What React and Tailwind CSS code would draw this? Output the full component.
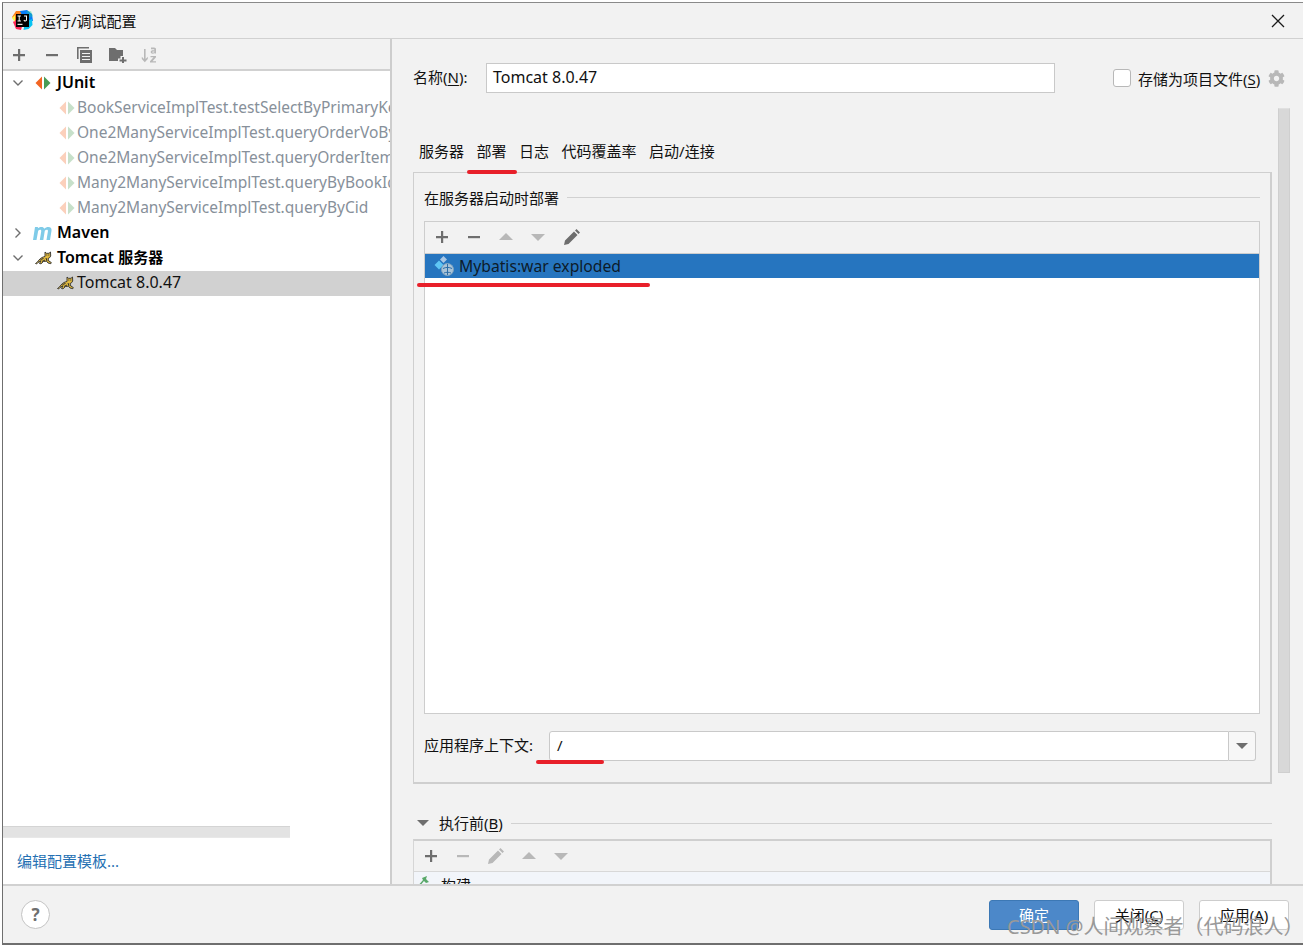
import React from "react";
import { FaCog } from "react-icons/fa";

const Chevron = ({ open }) => (
  <svg width="12" height="12" viewBox="0 0 12 12" className="shrink-0">
    <path d={open ? "M1.5 3.500 6 8l4.500-4.500" : "M3.500 1.500 8 6l-4.500 4.500"} fill="none" stroke="#6e6e6e" strokeWidth="1.400" />
  </svg>
);

const JUnitIcon = ({ faded }) => (
  <svg width="16" height="16" viewBox="0 0 16 16" className="shrink-0" opacity={faded ? 0.3 : 1}>
    <path d="M7 1.500v13L.5 8z" fill="#f26522" />
    <path d="M9 1.500v13L15.500 8z" fill="#499c54" />
  </svg>
);

const MavenIcon = () => (
  <svg width="20" height="16" viewBox="0 0 20 16" className="-ml-[2px] shrink-0">
    <path d="M0 15 2 2h3l-.2 1.300C6 2.300 7.300 2 8.500 2c1.400 0 2.400.6 2.700 1.700C12.400 2.500 13.900 2 15.300 2c2.500 0 3.600 1.400 3.200 3.800L17 15h-3.500l1.400-8.500c.2-1.100-.2-1.700-1.100-1.700-.7 0-1.400.4-2 1L10.300 15H6.800l1.400-8.500c.2-1.100-.2-1.700-1.100-1.700-.7 0-1.300.3-1.900 1L3.500 15z" fill="#7fcbe8" />
  </svg>
);

const TomcatIcon = () => (
  <svg width="18" height="15" viewBox="0 0 18 15" className="shrink-0">
    <path d="M.5 13.500c1.500-.8 2.500-2 3.500-3.500 1.500-2 3.500-3 6-3.500L10 2l1.500 1.300h2.500L15.500 2l.2 4-1.200 1.800-1.500.8.800 2.400 2.500 1.500-.5 1.200-2.800-.7-1.500-1.800-3 .3-2.500 2.300-1.500-.3 1.500-2.800L3 12.500l-1.500 1.500z" fill="#e0b93e" stroke="#2f2f2f" strokeWidth="0.900" strokeLinejoin="round" />
    <path d="M11.300 5h1M13.300 5h1M5.500 9.500l3-1M7 11.500l3-1.500M11 8l1 3" stroke="#2f2f2f" strokeWidth="1" fill="none" />
  </svg>
);

const Logo = () => (
  <svg width="21" height="21" viewBox="0 0 21 21">
    <path d="M0 7 4 1l6 0 0 9-5 3z" fill="#fc801d" />
    <path d="M1 12 6 8l5 5-2 7-5-1z" fill="#fe2857" />
    <path d="M8 1 15 0l5 4 1 7-9-1z" fill="#087cfa" />
    <path d="M14 1h5l2 5-4 2z" fill="#21d789" opacity="0.35" />
    <path d="M13 12l7-3 .5 6-4 4-5 1z" fill="#07c3f2" />
    <path d="M0 8l3-3v7z" fill="#fcf84a" />
    <rect x="4" y="4" width="13" height="13" fill="#000" />
    <rect x="5.500" y="13.800" width="5" height="1.100" fill="#fff" />
    <path d="M5.500 5.500h3.400v1H7.700v4h1.200v1H5.500v-1h1.200v-4H5.500zM12 5.500h3v4.300c0 1.100-.7 1.700-1.700 1.700-.9 0-1.600-.5-1.800-1.300l.9-.4c.1.500.4.700.8.700s.8-.2.800-.8V6.500H12z" fill="#fff" />
  </svg>
);

const Plus = ({ c = "#6e6e6e" }) => (
  <svg width="16" height="16" viewBox="0 0 16 16" className="shrink-0"><path d="M7 2h2.200v5H14v2.200H9.200V14H7V9.200H2V7h5z" fill={c} /></svg>
);
const Minus = ({ c = "#6e6e6e" }) => (
  <svg width="16" height="16" viewBox="0 0 16 16" className="shrink-0"><rect x="2" y="7" width="12" height="2.200" fill={c} /></svg>
);
const Up = ({ c = "#b8b8b8" }) => (
  <svg width="16" height="16" viewBox="0 0 16 16" className="shrink-0"><path d="M8 4l7 7H1z" fill={c} /></svg>
);
const Down = ({ c = "#b8b8b8" }) => (
  <svg width="16" height="16" viewBox="0 0 16 16" className="shrink-0"><path d="M1 5h14l-7 7z" fill={c} /></svg>
);
const Pencil = ({ c = "#6e6e6e" }) => (
  <svg width="18" height="18" viewBox="0 0 18 18" className="shrink-0"><path d="M1 17l1-4.500L11 3.500l3.500 3.500-9 9zM12 2.500l1.500-1.500 3.500 3.500L15.500 6z" fill={c} /></svg>
);
const Copy = () => (
  <svg width="16" height="16" viewBox="0 0 16 16" className="shrink-0">
    <path d="M0 0h12v1.600H1.600V12H0z" fill="#6e6e6e" />
    <path d="M3 3h12v13H3z" fill="#6e6e6e" />
    <path d="M5 6h8v1.100H5zM5 9h8v1.100H5zM5 12h8v1.100H5z" fill="#f2f2f2" />
  </svg>
);
const FolderPlus = () => (
  <svg width="18" height="16" viewBox="0 0 18 16" className="shrink-0">
    <path d="M0 1h6l2 2h6v6h-2.500v2.500H9V14H0z" fill="#6e6e6e" />
    <path d="M13 10h2v2.500h2.500v2H15V16h-2v-1.500h-2.500v-2H13z" fill="#6e6e6e" />
  </svg>
);
const Sort = () => (
  <svg width="18" height="18" viewBox="0 0 18 18" className="shrink-0">
    <path d="M4 3h1.600v10l2.200-2.300V13l-3 3.200L1.800 13v-2.300L4 13z" fill="#b8b8b8" />
    <path d="M11 1.500h3c1.300 0 2 .7 2 1.800V7.500h-1.500v-.6c-.4.500-1 .8-1.800.8-1.200 0-2-.7-2-1.700 0-1.100.9-1.700 2.300-1.700h1.500c0-.7-.3-1.100-1-1.100H11zm3.500 3.900h-1.400c-.6 0-1 .2-1 .6s.3.600.8.600c.9 0 1.600-.4 1.600-1.200z" fill="#b8b8b8" />
    <path d="M10.500 10h5.500v1.300L12.500 15.200H16v1.300h-6v-1.300l3.500-3.900h-3z" fill="#b8b8b8" />
  </svg>
);
const ArtifactIcon = () => (
  <svg width="22" height="21" viewBox="0 0 22 21" className="shrink-0">
    <path d="M9.500 0 13 3.500 9.500 7 6 3.500z" fill="#a9c7e4" />
    <path d="M5 4.500l4.500 4.500L5 13.500.5 9z" fill="#5fc6f5" />
    <circle cx="13.500" cy="13.500" r="6" fill="#a9c3d8" stroke="#7fa3bf" />
    <path d="M9 12.500c3-1.500 6-1.500 9 0M13.500 8v11M10 17c2-1 5-1 7 0" stroke="#2c6ea8" strokeWidth="1" fill="none" />
  </svg>
);

const Row = ({ indent, chevron, icon, bold, muted, sel, children }) => (
  <div className={`flex h-[25px] items-center overflow-hidden whitespace-nowrap ${sel ? "bg-[#d1d1d1]" : ""}`}>
    <div className={`flex shrink-0 items-center pb-[2px] ${indent ? "w-[74px] justify-end pr-[2px]" : "w-[54px]"}`}>
      {!indent && <span className="ml-[9px] mr-[11px] flex"><Chevron open={chevron === "open"} /></span>}
      {icon}
    </div>
    <span className={`pb-[4px] ${bold ? "text-[16px] font-semibold text-black" : ""} ${muted ? "text-[15.500px] text-[#87909a]" : ""} ${sel ? "text-[16px]" : ""}`}>{children}</span>
  </div>
);

const U = ({ children }) => <span className="underline underline-offset-2">{children}</span>;

export default function App() {
  return (
    <div className="relative h-[946px] w-[1303px] overflow-hidden bg-white text-[15px] leading-[20px] text-[#111111] [font-family:'Noto_Sans','Noto_Sans_CJK_SC',sans-serif]">
      <div className="mb-[1px] ml-[2px] mt-[2px] flex h-[943px] flex-col border-b-2 border-l border-t border-[#6f6f6f] border-t-[#8a8a8a] bg-[#f2f2f2]">
        <div className="flex h-[36px] shrink-0 items-center border-b border-[#d1d1d1] pl-[9px] pr-[18px]">
          <Logo />
          <span className="ml-[8px] flex-1">运行/调试配置</span>
          <svg width="14" height="14" viewBox="0 0 14 14"><path d="M1 1l12 12M13 1 1 13" stroke="#1a1a1a" strokeWidth="1.300" /></svg>
        </div>

        <div className="flex h-[845px] shrink-0 overflow-hidden">
          <div className="flex w-[389px] shrink-0 flex-col border-r-2 border-[#cdcdcd] bg-white">
            <div className="flex h-[32px] shrink-0 items-center gap-[17px] border-b-2 border-[#d1d1d1] bg-[#f2f2f2] pl-[8px] pt-[2px]">
              <Plus /><Minus /><Copy /><span className="-ml-px flex"><FolderPlus /></span><span className="-ml-[4px] flex"><Sort /></span>
            </div>
            <div className="flex-1">
              <Row chevron="open" bold icon={<JUnitIcon />}>JUnit</Row>
              <Row indent muted icon={<JUnitIcon faded />}>BookServiceImplTest.testSelectByPrimaryKey</Row>
              <Row indent muted icon={<JUnitIcon faded />}>One2ManyServiceImplTest.queryOrderVoById</Row>
              <Row indent muted icon={<JUnitIcon faded />}>One2ManyServiceImplTest.queryOrderItemById</Row>
              <Row indent muted icon={<JUnitIcon faded />}>Many2ManyServiceImplTest.queryByBookId</Row>
              <Row indent muted icon={<JUnitIcon faded />}>Many2ManyServiceImplTest.queryByCid</Row>
              <Row chevron="closed" bold icon={<MavenIcon />}>Maven</Row>
              <Row chevron="open" bold icon={<TomcatIcon />}>Tomcat <span className="text-[15px]">服务器</span></Row>
              <Row indent sel icon={<TomcatIcon />}>Tomcat 8.0.47</Row>
            </div>
            <div className="h-[12px] w-[287px] shrink-0 border-y border-[#d4d4d4] border-b-[#e8e8e8] bg-[#e3e3e3]" />
            <div className="flex h-[46px] shrink-0 items-center pl-[14px] text-[#2470b3]">编辑配置模板...</div>
          </div>

          <div className="flex min-w-0 flex-1 flex-col">
            <div className="flex h-[54px] shrink-0 items-end pl-[21px] pr-[16px]">
              <div className="flex h-[30px] w-full items-center">
                <span className="w-[73px] shrink-0 pb-[2px]">名称(<U>N</U>):</span>
                <div className="flex h-[30px] w-[569px] shrink-0 items-center border border-[#c9c9c9] bg-white pb-[2px] pl-[6px] text-[16px]">Tomcat 8.0.47</div>
                <div className="ml-[58px] h-[18px] w-[18px] shrink-0 rounded-[3px] border border-[#b8b8b8] bg-white" />
                <span className="ml-[7px] mt-[2px] whitespace-nowrap">存储为项目文件(<U>S</U>)</span>
                <span className="ml-[8px] flex text-[#b8b8b8]"><FaCog size={17} /></span>
              </div>
            </div>

            <div className="flex min-h-0 flex-1">
              <div className="ml-[21px] flex min-h-0 w-[859px] shrink-0 flex-col">
                <div className="flex h-[79px] shrink-0 items-end gap-[12.500px] pb-[11px] pl-[6px]">
                  <span>服务器</span>
                  <span>部署</span>
                  <span>日志</span>
                  <span>代码覆盖率</span>
                  <span>启动/连接</span>
                </div>
                <div className="flex h-[612px] shrink-0 flex-col border-2 border-l border-t border-[#cfcfcf] px-[10px]">
                  <div className="flex h-[48px] shrink-0 items-center gap-[8px]">
                    <span className="pt-[2px]">在服务器启动时部署</span>
                    <div className="h-px flex-1 bg-[#d1d1d1]" />
                  </div>
                  <div className="flex h-[493px] shrink-0 flex-col border border-[#cdcdcd] bg-white">
                    <div className="flex h-[31px] shrink-0 items-center gap-[16px] bg-[#f2f2f2] pb-[2px] pl-[9px]">
                      <Plus /><Minus /><Up /><Down /><span className="ml-px flex"><Pencil /></span>
                    </div>
                    <div className="flex h-[25px] shrink-0 items-center border-t border-[#cdcdcd] bg-[#2675bf] pl-[9px] leading-none">
                      <ArtifactIcon />
                      <span className="ml-[3px] pt-[1px] text-[15.700px] text-[#0d1b2a]">Mybatis:war exploded</span>
                    </div>
                  </div>
                  <div className="mt-[17px] flex h-[30px] shrink-0 items-center">
                    <span className="w-[125px] shrink-0 pb-[2px]">应用程序上下文:</span>
                    <div className="flex h-[30px] w-[680px] shrink-0 items-center rounded-l-[3px] border border-[#c9c9c9] bg-white pb-[2px] pl-[7px]">/</div>
                    <div className="flex h-[30px] w-[27px] shrink-0 items-center justify-center rounded-r-[3px] border border-l-0 border-[#c9c9c9] bg-[#f7f7f7]">
                      <svg width="12" height="8" viewBox="0 0 12 8"><path d="M0 1h12L6 7z" fill="#6e6e6e" /></svg>
                    </div>
                  </div>
                </div>

                <div className="mt-[28px] flex h-[22px] shrink-0 items-center">
                  <svg width="12" height="8" viewBox="0 0 12 8" className="ml-[4px] mr-[10px] shrink-0"><path d="M0 1h12L6 7z" fill="#6e6e6e" /></svg>
                  <span>执行前(<U>B</U>)</span>
                  <div className="ml-[8px] h-px flex-1 bg-[#d1d1d1]" />
                </div>
                <div className="mt-[5px] min-h-0 flex-1 border-x-2 border-t-2 border-[#cfcfcf] border-l border-l-[#d6d6d6]">
                  <div className="flex h-[31px] items-center gap-[16px] border-b border-[#d8d8d8] pl-[9px]">
                    <Plus /><Minus c="#b8b8b8" /><Pencil c="#b8b8b8" /><Up /><Down />
                  </div>
                  <div className="flex h-[26px] items-start gap-[11px] bg-[#f2f5fa] pl-[2px] pt-[3px]">
                    <svg width="14" height="14" viewBox="0 0 14 14" className="shrink-0"><path d="M1 12 7 5 6 3l5-2-1 3 3 3-3 1-2-2-5 6z" fill="#59a869" /></svg>
                    <span>构建</span>
                  </div>
                </div>
              </div>
              <div className="ml-[6px] mt-[15px] h-[665px] w-[12px] shrink-0 border border-[#cfcfcf] border-t-[#e0e0e0] bg-[#d8d8d8]" />
            </div>
          </div>
        </div>

        <div className="flex min-h-0 flex-1 items-center justify-between border-t-2 border-[#d1d1d1] pl-[18px] pr-[14px]">
          <div className="flex h-[29px] w-[29px] items-center justify-center rounded-full border border-[#c4c4c4] bg-white text-[17px] font-bold text-[#6e6e6e]">?</div>
          <div className="flex gap-[15px]">
            <div className="flex h-[30px] w-[90px] items-center justify-center rounded-[3px] border border-[#3c78b5] bg-[#4c88c9] text-white">确定</div>
            <div className="flex h-[30px] w-[90px] items-center justify-center rounded-[3px] border border-[#cdcdcd] bg-white">关闭(<U>C</U>)</div>
            <div className="flex h-[30px] w-[90px] items-center justify-center rounded-[3px] border border-[#cdcdcd] bg-white">应用(<U>A</U>)</div>
          </div>
        </div>
      </div>

      <div className="absolute left-[467px] top-[170px] h-[4px] w-[50px] rounded-full bg-[#e8202a]" />
      <div className="absolute left-[417px] top-[283px] h-[4px] w-[233px] rounded-full bg-[#e8202a]" />
      <div className="absolute left-[536px] top-[760px] h-[4px] w-[68px] rounded-full bg-[#e8202a]" />
      <div className="absolute left-[1007px] top-[916px] whitespace-nowrap text-[20px] leading-[22px] text-[#999999]">CSDN @人间观察者（代码浪人）</div>
    </div>
  );
}
